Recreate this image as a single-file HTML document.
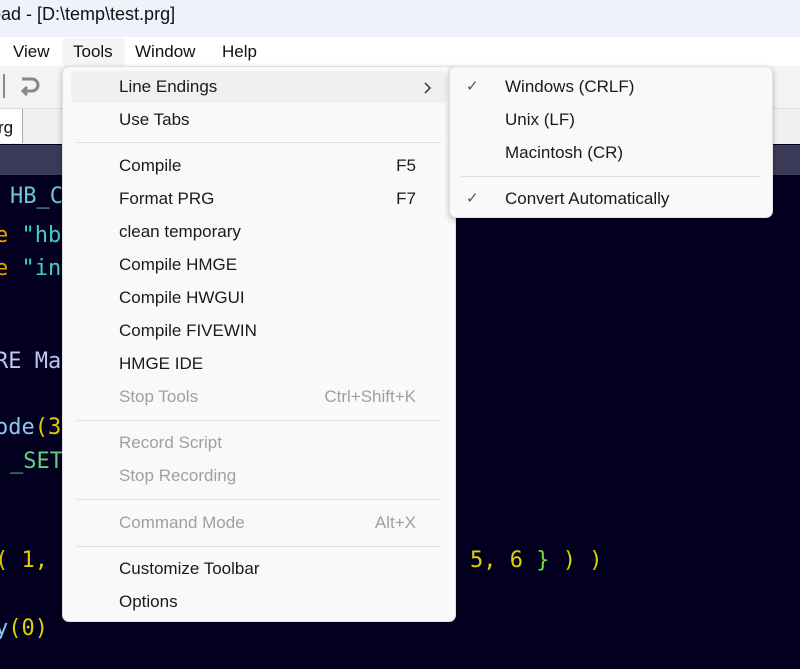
<!DOCTYPE html>
<html><head><meta charset="utf-8"><style>
*{margin:0;padding:0;box-sizing:border-box}
body{width:800px;height:669px;overflow:hidden;position:relative;background:#03001f;font-family:"Liberation Sans",sans-serif}
.a{position:absolute}
.code{position:absolute;font-family:"DejaVu Sans Mono","Liberation Mono",monospace;font-size:22px;white-space:pre;line-height:24px}
.mi{position:absolute;left:118px;font-size:17px;color:#1a1a1a;line-height:20px}
.sc{position:absolute;right:39px;font-size:17px;color:#1a1a1a;line-height:20px}
.dis{color:#a0a0a0}
.sep{position:absolute;left:14px;right:14px;height:1px;background:#dcdcdc}
.si{position:absolute;left:55px;font-size:17px;color:#1a1a1a;line-height:20px}
.ck{position:absolute;left:16px;font-size:15px;color:#555;line-height:20px}
</style></head><body>
<div class="a" style="left:0;top:0;width:800px;height:37px;background:#eef2fa"></div>
<div class="a" style="left:-9px;top:4px;font-size:18px;color:#111">pad - [D:\temp\test.prg]</div>
<div class="a" style="left:0;top:37px;width:800px;height:29px;background:#fff"></div>
<div class="a" style="left:62px;top:38px;width:63px;height:28px;background:#f5f5f5;border-radius:4px"></div>
<div class="a" style="left:13px;top:42px;font-size:17px;color:#111">View</div>
<div class="a" style="left:73px;top:42px;font-size:17px;color:#111">Tools</div>
<div class="a" style="left:135px;top:42px;font-size:17px;color:#111">Window</div>
<div class="a" style="left:222px;top:42px;font-size:17px;color:#111">Help</div>
<div class="a" style="left:0;top:66px;width:800px;height:42px;background:#f3f3f3"></div>
<div class="a" style="left:3px;top:74px;width:2px;height:24px;background:#888"></div>
<svg class="a" style="left:18px;top:76px" width="24" height="20" viewBox="0 0 24 20"><path d="M4 3h10a6 6 0 0 1 0 12H6M9 11l-4 4 4 4" fill="none" stroke="#888" stroke-width="3"/></svg>
<div class="a" style="left:0;top:108px;width:800px;height:36px;background:#f0f0f0;border-top:1px solid #ddd"></div>
<div class="a" style="left:0;top:109px;width:23px;height:34px;background:#fff;border-right:1px solid #aaa"></div>
<div class="a" style="left:-2px;top:118px;font-size:17px;color:#111">rg</div>
<div class="a" style="left:0;top:145px;width:800px;height:30px;background:#3a3a58"></div>

<div class="code" style="left:10px;top:185px;color:#6cc8d8">HB_C</div>
<div class="code" style="left:-5px;top:224px"><span style="color:#e8a000">e </span><span style="color:#40d0c8">"hb</span></div>
<div class="code" style="left:-5px;top:257px"><span style="color:#e8a000">e </span><span style="color:#40d0c8">"in</span></div>
<div class="code" style="left:-5px;top:350px;color:#c4c4f0">RE Ma</div>
<div class="code" style="left:-5px;top:416px"><span style="color:#8cc8f0">ode</span><span style="color:#e0d000">(3</span></div>
<div class="code" style="left:10px;top:450px;color:#60d080">_SET</div>
<div class="code" style="left:-5px;top:549px;color:#e0d000">( 1,</div>
<div class="code" style="left:470px;top:549px;color:#e0d000">5, 6 <span style="color:#70e040">}</span> ) )</div>
<div class="code" style="left:-5px;top:617px"><span style="color:#8cc8f0">y</span><span style="color:#e0d000">(0)</span></div>

<div class="a" style="left:62px;top:66px;width:394px;height:556px;background:#f9f9f9;border:1px solid #e0e0e0;border-radius:7px;box-shadow:0 2px 6px rgba(0,0,0,.25)">
<div class="a" style="left:8px;top:4px;width:376px;height:32px;background:#f0f0f0;border-radius:5px"></div>
<div class="mi" style="left:56px;top:10px">Line Endings</div>
<svg class="a" style="left:360px;top:14px" width="10" height="14" viewBox="0 0 10 14"><path d="M2 2l5 5-5 5" fill="none" stroke="#333" stroke-width="1.5"/></svg>
<div class="mi" style="left:56px;top:43px">Use Tabs</div>
<div class="sep" style="top:75px"></div>
<div class="mi" style="left:56px;top:89px">Compile</div><div class="sc" style="top:89px">F5</div>
<div class="mi" style="left:56px;top:122px">Format PRG</div><div class="sc" style="top:122px">F7</div>
<div class="mi" style="left:56px;top:155px">clean temporary</div>
<div class="mi" style="left:56px;top:188px">Compile HMGE</div>
<div class="mi" style="left:56px;top:221px">Compile HWGUI</div>
<div class="mi" style="left:56px;top:254px">Compile FIVEWIN</div>
<div class="mi" style="left:56px;top:287px">HMGE IDE</div>
<div class="mi dis" style="left:56px;top:320px">Stop Tools</div><div class="sc dis" style="top:320px">Ctrl+Shift+K</div>
<div class="sep" style="top:353px"></div>
<div class="mi dis" style="left:56px;top:366px">Record Script</div>
<div class="mi dis" style="left:56px;top:399px">Stop Recording</div>
<div class="sep" style="top:432px"></div>
<div class="mi dis" style="left:56px;top:446px">Command Mode</div><div class="sc dis" style="top:446px">Alt+X</div>
<div class="sep" style="top:479px"></div>
<div class="mi" style="left:56px;top:492px">Customize Toolbar</div>
<div class="mi" style="left:56px;top:525px">Options</div>
</div>

<div class="a" style="left:449px;top:66px;width:324px;height:152px;background:#f9f9f9;border:1px solid #e0e0e0;border-radius:7px;box-shadow:0 2px 6px rgba(0,0,0,.25)">
<div class="ck" style="top:10px">✓</div><div class="si" style="top:10px">Windows (CRLF)</div>
<div class="si" style="top:43px">Unix (LF)</div>
<div class="si" style="top:76px">Macintosh (CR)</div>
<div class="sep" style="top:109px;left:11px;right:12px"></div>
<div class="ck" style="top:122px">✓</div><div class="si" style="top:122px">Convert Automatically</div>
</div>
</body></html>
